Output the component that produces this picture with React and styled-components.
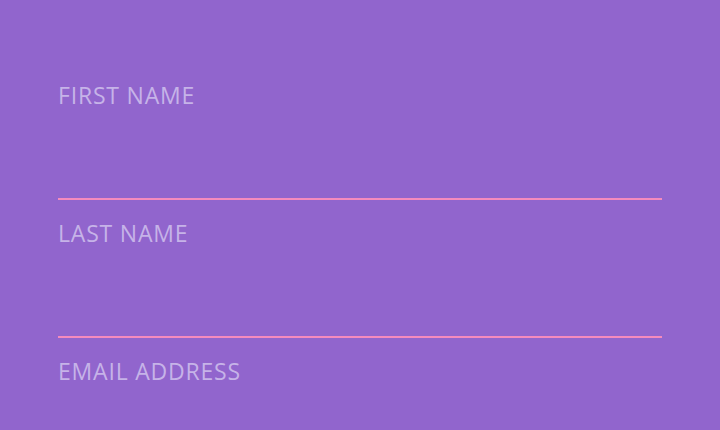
import styled, { createGlobalStyle } from "styled-components";

const Global = createGlobalStyle`
  html, body {
    margin: 0;
    background: #9165cd;
  }
`;

const Page = styled.div`
  width: 720px;
  height: 430px;
  overflow: hidden;
  background: #9165cd;
  box-sizing: border-box;
  padding: 80px 58px 0;
  display: flex;
  flex-direction: column;
  gap: 18px;
`;

const Field = styled.div`
  display: flex;
  flex-direction: column;
`;

const Label = styled.label`
  font-family: "Open Sans", "Liberation Sans", sans-serif;
  font-size: 23px;
  font-weight: 500;
  line-height: 30px;
  height: 30px;
  color: #c6b3e8;
  text-transform: uppercase;
  letter-spacing: 0.8px;
`;

const Input = styled.input`
  height: 88px;
  border: none;
  border-bottom: 2px solid #f58bbd;
  background: transparent;
  outline: none;
  padding: 0;
  box-sizing: content-box;
  font-family: "Open Sans", sans-serif;
  font-size: 20px;
  color: #fff;
`;

const fields = ["First name", "Last name", "Email address"];

export default function App() {
  return (
    <>
      <Global />
      <Page>
        {fields.map((f) => (
          <Field key={f}>
            <Label>{f}</Label>
            <Input type="text" />
          </Field>
        ))}
      </Page>
    </>
  );
}
